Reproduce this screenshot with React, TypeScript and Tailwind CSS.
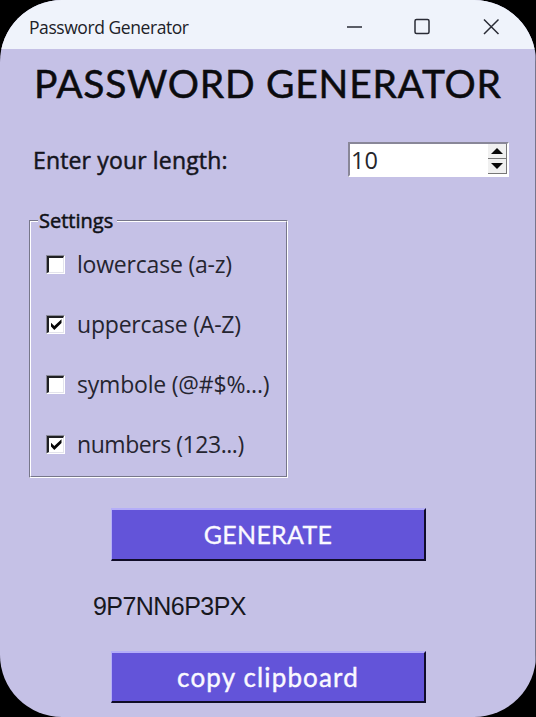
import { useState } from "react";

const ui = "font-['Open_Sans','Noto_Sans',sans-serif]";
const display = "font-['Lato','Open_Sans',sans-serif]";

type Option = { label: string; on: boolean; tracking: string };

const initialOptions: Option[] = [
  { label: "lowercase (a-z)", on: false, tracking: "tracking-[-0.2px]" },
  { label: "uppercase (A-Z)", on: true, tracking: "tracking-[-0.2px]" },
  { label: "symbole (@#$%...)", on: false, tracking: "tracking-[-0.2px]" },
  { label: "numbers (123...)", on: true, tracking: "tracking-[-0.45px]" },
];

function TitleBar() {
  return (
    <header className="flex h-[49px] shrink-0 items-start justify-between bg-[#eff3fb] pl-[29px] pr-[36px]">
      <span className={`${ui} mt-[15px] whitespace-nowrap text-[17.5px] leading-6 tracking-[-0.43px] text-[#202127]`}>
        Password Generator
      </span>
      <svg className="mt-[18px] h-[18px] w-[154px]" viewBox="0 0 154 18" fill="none" stroke="#292b35" strokeWidth="1.5">
        <path d="M1 9h15" />
        <rect x="69" y="1.5" width="14" height="14" rx="1.5" />
        <path d="m138 1.5 14.5 14.5M152.5 1.5 138 16" />
      </svg>
    </header>
  );
}

function SpinButton({ down = false }: { down?: boolean }) {
  return (
    <button className="flex h-[15px] w-[19px] items-center justify-center border-b-[1.5px] border-r-[1.5px] border-[#777] bg-[#f0f0f0]">
      <svg width="12" height="6" viewBox="0 0 12 6">
        <path d={down ? "M0 0h12L6 6z" : "M6 0l6 6H0z"} fill="#080808" />
      </svg>
    </button>
  );
}

function LengthInput() {
  return (
    <div className="flex h-[35px] w-[161px] justify-between border-2 border-b-white border-l-[#898798] border-r-white border-t-[#898798] bg-white">
      <span className={`${ui} mt-[-1px] pl-[1px] text-[23.5px] leading-[34px] text-[#25252b]`}>10</span>
      <div className="flex flex-col">
        <SpinButton />
        <SpinButton down />
      </div>
    </div>
  );
}

function CheckRow({ option, onToggle }: { option: Option; onToggle: () => void }) {
  return (
    <label className="flex h-[60px] items-center">
      <input type="checkbox" className="sr-only" checked={option.on} onChange={onToggle} />
      <span className="h-[19px] w-[19px] border border-b-white border-l-[#898998] border-r-white border-t-[#898998]">
        <span className="flex h-full w-full items-center justify-center border-b border-l-2 border-r border-t-2 border-b-[#e3e3ec] border-l-[#202024] border-r-[#e3e3ec] border-t-[#202024] bg-white">
          {option.on && (
            <svg width="12" height="11" viewBox="0 0 12 11" className="shrink-0">
              <path d="M1 3.8v3.6L4.3 11 11.5 4V0.3L4.3 7z" fill="#050505" />
            </svg>
          )}
        </span>
      </span>
      <span className={`${ui} ${option.tracking} ml-[12px] whitespace-nowrap text-[23px] leading-8 text-[#252530]`}>
        {option.label}
      </span>
    </label>
  );
}

function Settings() {
  const [options, setOptions] = useState(initialOptions);
  const toggle = (index: number) =>
    setOptions(options.map((o, i) => (i === index ? { ...o, on: !o.on } : o)));
  return (
    <section className="ml-[29px] mt-[43px] h-[258px] w-[259px] border border-b-white border-l-[#77778a] border-r-white border-t-[#77778a]">
      <div className="h-full border border-b-[#77778a] border-l-white border-r-[#77778a] border-t-white pl-[15px]">
        <h2 className={`${ui} -mb-px -ml-[8px] -mt-[15px] w-[79px] whitespace-nowrap bg-[#c5c1e6] pl-[1px] text-[20px] leading-7 text-[#101016] [-webkit-text-stroke:0.5px_#101016]`}>
          Settings
        </h2>
        {options.map((option, i) => (
          <CheckRow key={option.label} option={option} onToggle={() => toggle(i)} />
        ))}
      </div>
    </section>
  );
}

function ActionButton({ text, className }: { text: string; className: string }) {
  return (
    <button className={`ml-[111px] w-[315px] shrink-0 border-b-2 border-l border-r-2 border-t-2 border-b-[#100c28] border-l-[#b4adf8] border-r-[#100c28] border-t-[#b4adf8] bg-[#6354d9] text-[#faf9ff] ${display} ${className}`}>
      {text}
    </button>
  );
}

export default function App() {
  return (
    <div className="h-[717px] w-[536px] overflow-hidden bg-black">
      <main className="flex h-full flex-col overflow-hidden rounded-[62px] bg-[#c5c1e6]">
        <TitleBar />
        <div className="flex flex-1 flex-col border-r border-[#77758c]">
          <h1 className={`${display} ml-[34px] mt-[10px] h-12 whitespace-nowrap text-[39px] leading-[48px] tracking-[0.75px] text-[#0b0b0e] [-webkit-text-stroke:0.5px_#0b0b0e]`}>
            PASSWORD GENERATOR
          </h1>
          <div className="mt-[35px] flex h-[35px] items-center justify-between pl-[33px] pr-[26px]">
            <span className={`${ui} whitespace-nowrap text-[23px] leading-8 tracking-[0.15px] text-[#15151d] [-webkit-text-stroke:0.5px_#15151d]`}>
              Enter your length:
            </span>
            <LengthInput />
          </div>
          <Settings />
          <ActionButton text="GENERATE" className="mt-[30px] h-[53px] text-[25px] tracking-[0.25px] [-webkit-text-stroke:0.3px_#faf9ff]" />
          <output className="ml-[93px] mt-[29px] h-8 font-['Liberation_Sans',sans-serif] text-[25px] leading-8 tracking-[-0.55px] text-[#17171d]">
            9P7NN6P3PX
          </output>
          <ActionButton text="copy clipboard" className="mt-[29px] h-[52px] text-[26px] tracking-[1.15px] [-webkit-text-stroke:0.4px_#faf9ff]" />
        </div>
      </main>
    </div>
  );
}
